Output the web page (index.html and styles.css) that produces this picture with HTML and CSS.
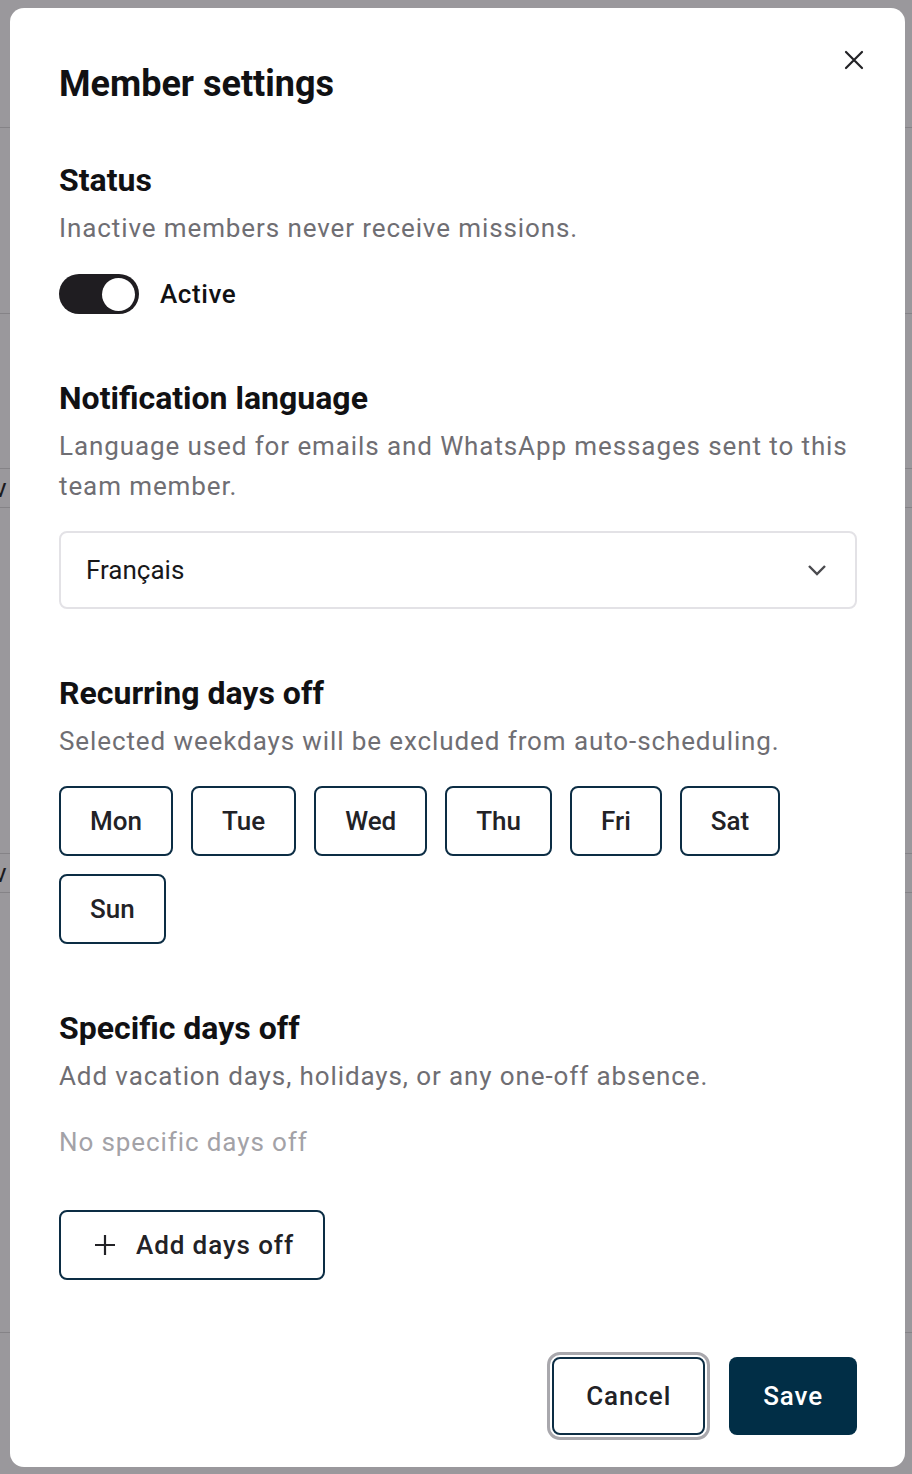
FILE: index.html
```html
<!DOCTYPE html>
<html lang="en">

<head>
    <meta charset="UTF-8">
    <meta name="viewport" content="width=device-width, initial-scale=1.0">
    <title>Member settings</title>
    <link rel="stylesheet" href="styles.css">
</head>

<body>
    <!-- page behind the dialog -->
    <div class="backdrop-page">
        <div class="page-row row-a"></div>
        <div class="page-row row-b"></div>
        <div class="page-row row-c"><span>v</span></div>
        <div class="page-row row-d"><span>v</span></div>
        <div class="page-row row-e"></div>
    </div>
    <div class="overlay"></div>

    <div class="modal" role="dialog">
        <button class="close-button" aria-label="Close">
            <svg width="20" height="20" viewBox="0 0 20 20">
                <path d="M2 2 L18 18 M18 2 L2 18" stroke="#222226" stroke-width="2.2" stroke-linecap="round" fill="none"/>
            </svg>
        </button>

        <h1 class="modal-title">Member settings</h1>

        <section class="section section-status">
            <h2 class="section-title">Status</h2>
            <p class="section-desc">Inactive members never receive missions.</p>
            <label class="toggle-row">
                <span class="toggle"><span class="toggle-knob"></span></span>
                <span class="toggle-label">Active</span>
            </label>
        </section>

        <section class="section">
            <h2 class="section-title">Notification language</h2>
            <p class="section-desc">Language used for emails and WhatsApp messages sent to this team member.</p>
            <div class="select">
                <span>Français</span>
                <svg width="20" height="12" viewBox="0 0 20 12">
                    <path d="M2 2 L10 10 L18 2" stroke="#4a4a4e" stroke-width="2.4" fill="none"/>
                </svg>
            </div>
        </section>

        <section class="section">
            <h2 class="section-title">Recurring days off</h2>
            <p class="section-desc">Selected weekdays will be excluded from auto-scheduling.</p>
            <div class="days">
                <button class="day">Mon</button>
                <button class="day">Tue</button>
                <button class="day">Wed</button>
                <button class="day">Thu</button>
                <button class="day">Fri</button>
                <button class="day">Sat</button>
                <button class="day">Sun</button>
            </div>
        </section>

        <section class="section">
            <h2 class="section-title">Specific days off</h2>
            <p class="section-desc">Add vacation days, holidays, or any one-off absence.</p>
            <p class="empty-note">No specific days off</p>
            <button class="outline-button add-button">
                <svg width="22" height="22" viewBox="0 0 22 22">
                    <path d="M11 1 V21 M1 11 H21" stroke="#222226" stroke-width="2.2" fill="none"/>
                </svg>
                Add days off
            </button>
        </section>

        <div class="modal-footer">
            <button class="outline-button cancel-button">Cancel</button>
            <button class="save-button">Save</button>
        </div>
    </div>
</body>

</html>
```

FILE: styles.css
```css
* {
    box-sizing: border-box;
}
body {
    margin: 0;
    height: 100vh;
    overflow: hidden;
    font-family: Roboto, "Noto Sans", Arial, sans-serif;
    background-color: #fff;
    color: #111113;
}
button {
    font-family: inherit;
    cursor: pointer;
}

/* page behind */
.backdrop-page {
    display: flex;
    flex-direction: column;
}
.page-row {
    border-bottom: 1px solid #d8d8d8;
    font-size: 26px;
    color: #111;
    line-height: 38px;
}
.row-a { height: 128px; }
.row-b { height: 186px; }
.row-c { height: 40px; margin-top: 154px; border-top: 1px solid #d8d8d8; }
.row-c span, .row-d span { display: block; margin-left: -6px; }
.row-d { height: 40px; margin-top: 345px; border-top: 1px solid #d8d8d8; }
.row-e { height: 440px; }
.overlay {
    position: fixed;
    inset: 0;
    background-color: rgba(40, 36, 44, 0.47);
}

/* dialog */
.modal {
    position: fixed;
    left: 10px;
    top: 8px;
    width: 895px;
    height: 1459px;
    background-color: #fff;
    border-radius: 14px;
    padding: 56px 48px 0 49px;
    display: flex;
    flex-direction: column;
}
.close-button {
    position: absolute;
    top: 32px;
    right: 31px;
    width: 40px;
    height: 40px;
    border: none;
    background: none;
    padding: 0;
    display: flex;
    align-items: center;
    justify-content: center;
}
.modal-title {
    margin: 0;
    font-size: 36px;
    font-weight: 700;
    line-height: 40px;
}
.section {
    margin-top: 64px;
}
.section-status {
    margin-top: 56px;
}
.section-title {
    margin: 0;
    font-size: 32px;
    font-weight: 700;
    line-height: 40px;
}
.section-desc {
    margin: 8px 0 0;
    font-size: 26px;
    line-height: 40px;
    color: #6f6e73;
    letter-spacing: 0.9px;
}

.toggle-row {
    margin-top: 26px;
    display: flex;
    align-items: center;
    gap: 21px;
}
.toggle {
    width: 80px;
    height: 40px;
    border-radius: 20px;
    background-color: #1f1d21;
    display: flex;
    align-items: center;
    justify-content: flex-end;
    padding-right: 4px;
}
.toggle-knob {
    width: 33px;
    height: 33px;
    border-radius: 50%;
    background-color: #fff;
}
.toggle-label {
    font-size: 26px;
    font-weight: 500;
    letter-spacing: 0.6px;
}

.select {
    margin-top: 25px;
    height: 78px;
    border: 2px solid #e3e2e6;
    border-radius: 8px;
    display: flex;
    align-items: center;
    justify-content: space-between;
    padding: 0 28px 0 25px;
    font-size: 26px;
    color: #18181a;
}

.days {
    margin-top: 25px;
    display: flex;
    flex-wrap: wrap;
    gap: 18px;
    padding-right: 40px;
}
.day, .outline-button {
    height: 70px;
    padding: 0 29px;
    border: 2px solid #0c2d44;
    border-radius: 8px;
    background-color: #fff;
    font-size: 26px;
    font-weight: 500;
    color: #222226;
}

.empty-note {
    margin: 26px 0 0;
    font-size: 26px;
    line-height: 40px;
    color: #a3a2a7;
    letter-spacing: 0.9px;
}
.add-button {
    margin-top: 48px;
    display: flex;
    align-items: center;
    gap: 20px;
    padding: 0 29px 0 33px;
    letter-spacing: 0.9px;
}

.modal-footer {
    margin-top: 77px;
    display: flex;
    justify-content: flex-end;
    gap: 24px;
}
.cancel-button {
    height: 78px;
    padding: 0 32px;
    letter-spacing: 0.9px;
    outline: 3px solid #a9a8ad;
    outline-offset: 2px;
}
.save-button {
    height: 78px;
    padding: 0 34px;
    border: none;
    border-radius: 8px;
    background-color: #012e46;
    color: #fff;
    font-size: 26px;
    font-weight: 500;
    letter-spacing: 0.9px;
}
```
